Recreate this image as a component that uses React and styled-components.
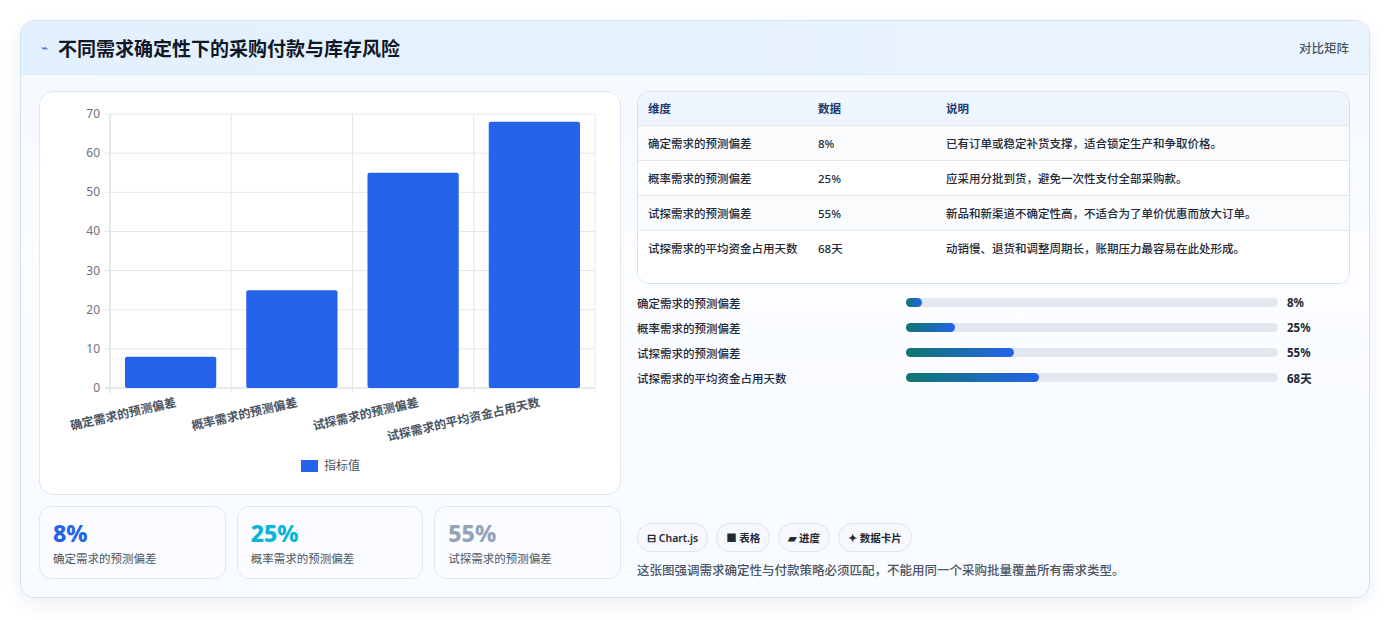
import React from "react";
import styled, { createGlobalStyle } from "styled-components";

const G = createGlobalStyle`
  body{margin:0;background:#fff;font-family:"Noto Sans","Noto Sans CJK SC",sans-serif;}
`;
const F = `"Noto Sans","Noto Sans CJK SC",sans-serif`;

const Page = styled.div`padding:20px 20px 20px 20px;width:1350px;`;
const Card = styled.div`
  border:1px solid #cfe3f5;border-radius:14px;overflow:hidden;height:578px;box-sizing:border-box;
  background:linear-gradient(180deg,#f3f8fe 0%,#fbfdff 40%,#f8fbff 100%);
  box-shadow:0 6px 18px rgba(30,64,120,.08);display:flex;flex-direction:column;
`;
const Header = styled.div`
  height:55px;box-sizing:border-box;display:flex;align-items:center;justify-content:space-between;
  padding:0 20px;background:linear-gradient(90deg,#e3f0fd,#eaf4fe);border-bottom:1px solid #d8e8f7;
`;
const Title = styled.h1`margin:0;font:700 19px ${F};color:#111827;display:flex;align-items:center;gap:10px;`;
const Bolt = styled.span`color:#3b6fe0;font-size:12px;font-weight:400;`;
const Tag = styled.span`font:500 12.5px ${F};color:#4b5563;`;
const Body = styled.div`flex:1;display:grid;grid-template-columns:582px 713px;gap:16px;padding:16px 18px 18px 18px;`;
const Col = styled.div`display:flex;flex-direction:column;gap:11px;`;
const ChartCard = styled.div`height:404px;box-sizing:border-box;background:#fff;border:1px solid #dfe7f1;border-radius:14px;`;
const Kpis = styled.div`display:grid;grid-template-columns:repeat(3,1fr);gap:11px;`;
const Kpi = styled.div`height:73px;box-sizing:border-box;border:1px solid #dbe7f5;border-radius:12px;background:#fafcff;padding:12px 13px;`;
const KVal = styled.div`font:800 23px ${F};color:${p => p.c};line-height:28px;`;
const KLbl = styled.div`font:400 11.5px ${F};color:#4b5563;margin-top:3px;`;
const Right = styled.div`display:flex;flex-direction:column;`;
const Table = styled.div`border:1px solid #d6e1ee;border-radius:12px;overflow:hidden;background:#fff;`;
const Row = styled.div`
  display:grid;grid-template-columns:170px 128px 1fr;padding:0 10px;box-sizing:border-box;
  min-height:${p => p.h || 35}px;align-items:${p => p.top ? "start" : "center"};padding-top:${p => p.top ? 9 : 0}px;
  background:${p => p.head ? "#eef5fe" : p.alt ? "#f9fbfd" : "#fff"};
  border-top:${p => p.first ? "none" : "1px solid #e1e8f0"};
  font:${p => p.head ? 700 : 500} 11.5px ${F};color:${p => p.head ? "#1e3a6e" : "#1f2937"};line-height:17px;
`;
const Bars = styled.div`display:flex;flex-direction:column;gap:8px;margin-top:10px;`;
const BarRow = styled.div`display:grid;grid-template-columns:269px 372px 1fr;gap:0 ;align-items:center;height:17px;font:500 11.5px ${F};color:#1f2937;`;
const Track = styled.div`height:9px;border-radius:5px;background:#e2e8f0;`;
const Fill = styled.div`height:100%;border-radius:5px;background:linear-gradient(90deg,#0f766e,#2563eb);`;
const Val = styled.span`font-weight:700;padding-left:9px;`;
const Foot = styled.div`margin-top:auto;`;
const Chips = styled.div`display:flex;gap:8px;`;
const Chip = styled.span`font:600 10.5px ${F};color:#1f2937;border:1px solid #dfe5ee;background:#f6f8fb;border-radius:14px;padding:0 9px;height:27px;display:inline-flex;align-items:center;`;
const Note = styled.p`margin:8px 0 0;font:500 12.5px ${F};color:#4b5563;`;

const cats = ["确定需求的预测偏差","概率需求的预测偏差","试探需求的预测偏差","试探需求的平均资金占用天数"];
const vals = [8,25,55,68];

function Chart(){
  const x0=70,x1=555,y0=296,yt=22,cw=(x1-x0)/4;
  const y=v=>y0-(y0-yt)*v/70;
  return (
    <svg width="582" height="402" style={{display:"block"}}>
      {[0,10,20,30,40,50,60,70].map(v=>(
        <g key={v}>
          <line x1={x0-5} x2={x1} y1={y(v)} y2={y(v)} stroke={v===0?"#cbd5e1":"#e5e7eb"}/>
          <text x={x0-10} y={y(v)+4} textAnchor="end" fontSize="12" fill="#6b7280" fontFamily="Noto Sans">{v}</text>
        </g>
      ))}
      {[0,1,2,3,4].map(i=><line key={i} x1={x0+i*cw} x2={x0+i*cw} y1={yt} y2={y0+5} stroke={i===0?"#cbd5e1":"#e5e7eb"}/>)}
      {vals.map((v,i)=><rect key={i} x={x0+i*cw+15} width={cw-30} y={y(v)} height={y0-y(v)} fill="#2563eb" rx="2"/>)}
      {cats.map((c,i)=>{
        const cx=x0+i*cw+cw/2+6;
        return <text key={i} transform={`translate(${cx},${y0+18}) rotate(-13)`} textAnchor="end" fontSize="12" fontWeight="600" fill="#4b5563" fontFamily="Noto Sans CJK SC">{c}</text>;
      })}
      <rect x="261" y="368" width="17" height="12" fill="#2563eb"/>
      <text x="284" y="378" fontSize="12" fill="#4b5563" fontFamily="Noto Sans CJK SC">指标值</text>
    </svg>
  );
}

const rows=[
  ["确定需求的预测偏差","8%","已有订单或稳定补货支撑，适合锁定生产和争取价格。"],
  ["概率需求的预测偏差","25%","应采用分批到货，避免一次性支付全部采购款。"],
  ["试探需求的预测偏差","55%","新品和新渠道不确定性高，不适合为了单价优惠而放大订单。"],
  ["试探需求的平均资金占用天数","68天","动销慢、退货和调整周期长，账期压力最容易在此处形成。"],
];

export default function App(){
  return (<>
    <G/>
    <Page><Card>
      <Header><Title><Bolt>⌁</Bolt>不同需求确定性下的采购付款与库存风险</Title><Tag>对比矩阵</Tag></Header>
      <Body>
        <Col>
          <ChartCard><Chart/></ChartCard>
          <Kpis>
            <Kpi><KVal c="#2563eb">8%</KVal><KLbl>确定需求的预测偏差</KLbl></Kpi>
            <Kpi><KVal c="#06b6d4">25%</KVal><KLbl>概率需求的预测偏差</KLbl></Kpi>
            <Kpi><KVal c="#94a3b8">55%</KVal><KLbl>试探需求的预测偏差</KLbl></Kpi>
          </Kpis>
        </Col>
        <Right>
          <Table>
            <Row head first h={33}><span>维度</span><span>数据</span><span>说明</span></Row>
            {rows.map((r,i)=>(
              <Row key={i} alt={i%2===0} h={i===3?53:35} top={i===3}>
                <span style={{paddingRight:i===3?14:0}}>{r[0]}</span><span>{r[1]}</span><span>{r[2]}</span>
              </Row>
            ))}
          </Table>
          <Bars>
            {rows.map((r,i)=>(
              <BarRow key={i}><span>{r[0]}</span><Track><Fill style={{width:Math.max(vals[i]/190*100,4)+"%"}}/></Track><Val>{r[1]}</Val></BarRow>
            ))}
          </Bars>
          <Foot>
            <Chips><Chip>⊟ Chart.js</Chip><Chip>■ 表格</Chip><Chip>▰ 进度</Chip><Chip>✦ 数据卡片</Chip></Chips>
            <Note>这张图强调需求确定性与付款策略必须匹配，不能用同一个采购批量覆盖所有需求类型。</Note>
          </Foot>
        </Right>
      </Body>
    </Card></Page>
  </>);
}
